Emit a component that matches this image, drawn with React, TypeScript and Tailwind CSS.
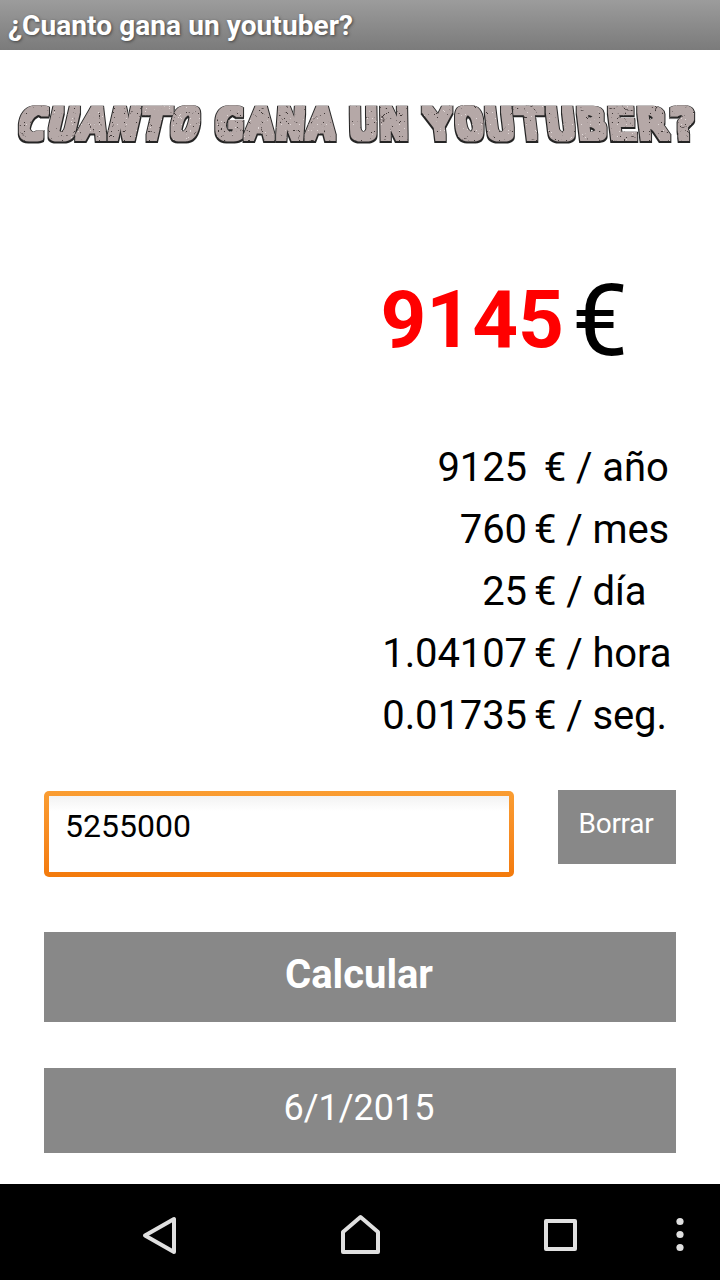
import { useState } from 'react'

interface Rate {
  value: string
  unit: string
}

const rates: Rate[] = [
  { value: '9125', unit: '\u00a0€ / año' },
  { value: '760', unit: '€ / mes' },
  { value: '25', unit: '€ / día' },
  { value: '1.04107', unit: '€ / hora' },
  { value: '0.01735', unit: '€ / seg.' },
]

// Each word leans a bit more to the left than the one before it
const words = [
  { text: 'CUANTO', x: 16, skew: -13 },
  { text: 'GANA', x: 215, skew: -4 },
  { text: 'UN', x: 350, skew: 1 },
  { text: 'YOUTUBER?', x: 427, skew: 7 },
]

function Banner() {
  return (
    <svg width="720" height="110" viewBox="0 0 720 110" className="block">
      <defs>
        <filter id="stone" x="0" y="0" width="720" height="110" filterUnits="userSpaceOnUse" colorInterpolationFilters="sRGB">
          <feMorphology in="SourceAlpha" operator="dilate" radius="3 3" result="block" />
          <feFlood floodColor="#b5a8a7" />
          <feComposite in2="block" operator="in" result="face" />
          {/* dark cracks */}
          <feTurbulence type="turbulence" baseFrequency="0.08 0.11" numOctaves="2" seed="7" />
          <feColorMatrix values="0 0 0 0 0.2  0 0 0 0 0.17  0 0 0 0 0.17  -18 0 0 0 0.9" />
          <feComposite in2="block" operator="in" result="cracks" />
          {/* light chips */}
          <feTurbulence type="turbulence" baseFrequency="0.11 0.16" numOctaves="2" seed="23" />
          <feColorMatrix values="0 0 0 0 0.95  0 0 0 0 0.93  0 0 0 0 0.93  -24 0 0 0 0.7" />
          <feComposite in2="block" operator="in" result="chips" />
          <feMorphology in="block" operator="dilate" radius="1" />
          <feOffset dx="0" dy="1.3" />
          <feGaussianBlur stdDeviation="0.7" result="edge" />
          <feFlood floodColor="#242424" />
          <feComposite in2="edge" operator="in" result="shadow" />
          <feMerge>
            <feMergeNode in="shadow" />
            <feMergeNode in="face" />
            <feMergeNode in="chips" />
            <feMergeNode in="cracks" />
          </feMerge>
        </filter>
      </defs>
      <g filter="url(#stone)" className="font-['DejaVu_Sans_Mono',monospace] text-[40px] tracking-[2.9px]">
        {words.map(word => (
          <text key={word.text} transform={`translate(${word.x} 88) skewX(${word.skew}) scale(1.13 1)`}>
            {word.text}
          </text>
        ))}
      </g>
    </svg>
  )
}

function NavBar() {
  return (
    <nav className="h-24 bg-black">
      <svg width="720" height="96" viewBox="0 0 720 96" fill="none" stroke="#e0e0e0" strokeWidth="4" strokeLinejoin="round">
        <path d="M145 51.5 L174 35 V68 Z" />
        <path d="M343 68 V48 L360.5 33 L378 48 V68 Z" />
        <path d="M546 37 H575 V65 H546 Z" />
        <g fill="#e0e0e0" stroke="none">
          <circle cx="680" cy="37.5" r="3.6" />
          <circle cx="680" cy="50.5" r="3.6" />
          <circle cx="680" cy="63.5" r="3.6" />
        </g>
      </svg>
    </nav>
  )
}

export default function App() {
  const [views, setViews] = useState('5255000')

  return (
    <main className="flex h-[1280px] w-[720px] flex-col bg-white font-['Roboto',sans-serif] text-black">
      <header className="h-[50px] bg-linear-to-b from-[#9c9c9c] to-[#7b7b7b] pl-2">
        <h1 className="text-[28px] leading-[51px] font-bold tracking-[0.08px] text-white text-shadow-[1px_1px_3px_#444]">¿Cuanto gana un youtuber?</h1>
      </header>

      <Banner />

      <div className="mt-[110px] flex h-[100px] items-center">
        <span className="w-[564px] text-right text-[80px] leading-[100px] font-bold text-[#ff0000]">9145</span>
        <span className="mt-[2px] ml-2 text-[100px] leading-[100px]">€</span>
      </div>

      <div className="mt-[67px] text-[40px] leading-[62px]">
        {rates.map(rate => (
          <div key={rate.value} className="flex">
            <span className="w-[527px] text-right tracking-[-0.1px]">{rate.value}</span>
            <span className="ml-[7px] tracking-[-0.1px]">{rate.unit}</span>
          </div>
        ))}
      </div>

      <div className="mt-[43px] flex h-[87px] items-start justify-between px-11">
        <div className="mt-[1px] h-[86px] w-[470px] rounded-[5px] bg-linear-to-b from-[#fa9d32] to-[#f37a0b] p-[5px]">
          <input
            value={views}
            onChange={e => setViews(e.target.value)}
            className="block h-full w-full bg-linear-to-b from-[#f3f3f3] to-white to-20% px-4 pb-4 text-[32px] outline-none"
          />
        </div>
        <button
          onClick={() => setViews('')}
          className="h-[74px] w-[118px] bg-[#888888] pr-[2px] pb-[7px] text-[28px] tracking-[-0.3px] text-white"
        >
          Borrar
        </button>
      </div>

      <button className="mx-11 mt-[55px] h-[90px] bg-[#888888] pr-[2px] pb-[5px] text-[40px] font-bold text-white">Calcular</button>
      <button className="mx-11 mt-[46px] h-[85px] bg-[#888888] pr-[2px] pb-[5px] text-[36px] text-white">6/1/2015</button>

      <div className="mt-auto">
        <NavBar />
      </div>
    </main>
  )
}
